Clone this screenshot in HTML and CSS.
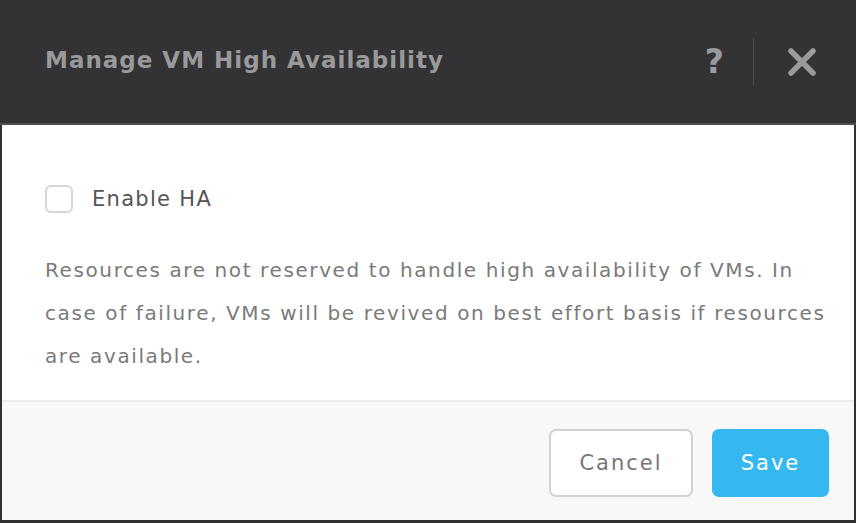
FILE: index.html
```html
<!DOCTYPE html>
<html lang="en">
<head>
    <meta charset="UTF-8">
    <title>Manage VM High Availability</title>
    <link rel="stylesheet" href="styles.css">
</head>
<body>
    <div class="dialog">
        <div class="dialog-header">
            <h1 class="dialog-title">Manage VM High Availability</h1>
            <div class="header-actions">
                <span class="help">?</span>
                <span class="divider"></span>
                <svg class="close" width="30" height="30" viewBox="0 0 30 30">
                    <path d="M4 4 L26 26 M26 4 L4 26" stroke="#9b9b9b" stroke-width="5.5" stroke-linecap="round"/>
                </svg>
            </div>
        </div>
        <div class="dialog-body">
            <label class="check-row">
                <span class="checkbox"></span>
                <span class="check-label">Enable HA</span>
            </label>
            <p class="note">Resources are not reserved to handle high availability of VMs. In case of failure, VMs will be revived on best effort basis if resources are available.</p>
        </div>
        <div class="dialog-footer">
            <button class="btn btn-cancel">Cancel</button>
            <button class="btn btn-save">Save</button>
        </div>
    </div>
</body>
</html>
```

FILE: styles.css
```css
body {
    margin: 0;
    padding: 0;
    font-family: "DejaVu Sans", Arial, sans-serif;
    background-color: #313133;
}
.dialog {
    width: 856px;
    height: 523px;
    box-sizing: border-box;
    border: 2px solid #313133;
    border-bottom-width: 3px;
    border-top: none;
    display: flex;
    flex-direction: column;
    background-color: #ffffff;
}
.dialog-header {
    height: 125px;
    background-color: #333335;
    border-bottom: 2px solid #505052;
    display: flex;
    align-items: center;
    justify-content: space-between;
    box-sizing: border-box;
    margin: 0 -2px;
    padding: 0 39px 0 45px;
}
.dialog-title {
    margin: 0 0 4px;
    font-size: 23px;
    font-weight: 700;
    letter-spacing: 1px;
    color: #9a9a9a;
}
.header-actions {
    display: flex;
    align-items: center;
}
.help {
    font-size: 33px;
    font-weight: 700;
    color: #9b9b9b;
    line-height: 1;
}
.divider {
    width: 1px;
    height: 48px;
    background-color: #4b4b4d;
    margin: 0 33px 0 29px;
}
.dialog-body {
    flex: 1;
    padding: 60px 8px 0 43px;
}
.check-row {
    display: flex;
    align-items: center;
}
.checkbox {
    width: 24px;
    height: 24px;
    border: 2px solid #d6d6d6;
    border-radius: 6px;
    display: inline-block;
}
.check-label {
    margin-left: 19px;
    font-size: 21px;
    letter-spacing: 1.3px;
    color: #555555;
}
.note {
    margin: 36px 0 0;
    font-size: 20px;
    letter-spacing: 1.6px;
    line-height: 43px;
    color: #7a7a7a;
}
.dialog-footer {
    height: 120px;
    box-sizing: border-box;
    background-color: #f8f8f8;
    border-top: 2px solid #ececec;
    display: flex;
    justify-content: flex-end;
    align-items: center;
    padding: 4px 25px 0 0;
    gap: 19px;
}
.btn {
    height: 68px;
    border-radius: 7px;
    font-family: "DejaVu Sans", Arial, sans-serif;
    font-size: 21px;
    letter-spacing: 2px;
}
.btn-cancel {
    width: 144px;
    background-color: #ffffff;
    border: 2px solid #cfd3d8;
    color: #777777;
}
.btn-save {
    width: 117px;
    background-color: #35b8f0;
    border: none;
    color: #ffffff;
}
```
